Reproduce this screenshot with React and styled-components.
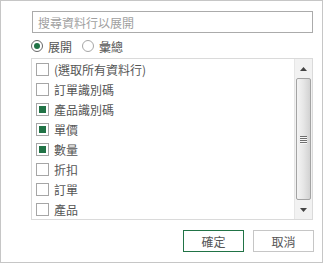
import React from 'react'
import styled, { createGlobalStyle } from 'styled-components'

const Global = createGlobalStyle`
  body {
    margin: 0;
    background: #fff;
    font-family: "Noto Sans CJK TC", "Noto Sans", sans-serif;
  }
`

const columns = [
  { label: '(選取所有資料行)', checked: false },
  { label: '訂單識別碼', checked: false },
  { label: '產品識別碼', checked: true },
  { label: '單價', checked: true },
  { label: '數量', checked: true },
  { label: '折扣', checked: false },
  { label: '訂單', checked: false },
  { label: '產品', checked: false },
]

const App = () => {
  return (
    <>
      <Global />
      <Panel>
        <Search placeholder="搜尋資料行以展開" />
        <Modes>
          <Mode>
            <Radio $on />
            展開
          </Mode>
          <Mode>
            <Radio />
            彙總
          </Mode>
        </Modes>
        <ListBox>
          <Items>
            {columns.map((c) => (
              <Item key={c.label}>
                <Check $on={c.checked} />
                {c.label}
              </Item>
            ))}
          </Items>
          <ScrollBar>
            <Arrow>
              <svg width="7" height="4" viewBox="0 0 7 4">
                <path d="M0 4 L3.5 0 L7 4 Z" fill="#444" />
              </svg>
            </Arrow>
            <Thumb>
              <Grip />
              <Grip />
              <Grip />
              <Grip />
            </Thumb>
            <Arrow>
              <svg width="7" height="4" viewBox="0 0 7 4">
                <path d="M0 0 L7 0 L3.5 4 Z" fill="#444" />
              </svg>
            </Arrow>
          </ScrollBar>
        </ListBox>
        <Actions>
          <Button $primary>確定</Button>
          <Button>取消</Button>
        </Actions>
      </Panel>
    </>
  )
}

const Panel = styled.div`
  box-sizing: border-box;
  width: 323px;
  height: 263px;
  border: 1px solid #c6c6c6;
  padding: 10px 9px 0 30px;
  display: flex;
  flex-direction: column;
`

const Search = styled.input`
  box-sizing: border-box;
  margin-left: 1px;
  width: 281px;
  height: 22px;
  border: 1px solid #ababab;
  padding: 0 5px;
  font-family: inherit;
  font-size: 12px;
  color: #555;
  outline: none;

  &::placeholder {
    color: #a0a0a0;
  }
`

const Modes = styled.div`
  display: flex;
  align-items: center;
  gap: 10px;
  height: 24px;
  margin-top: 1px;
  font-size: 12px;
  color: #555;
`

const Mode = styled.label`
  display: flex;
  align-items: center;
  gap: 5px;
`

const Radio = styled.span`
  box-sizing: border-box;
  width: 12px;
  height: 12px;
  border-radius: 50%;
  border: 1px solid ${(p) => (p.$on ? '#666' : '#a6a6a6')};
  display: inline-flex;
  align-items: center;
  justify-content: center;

  &::after {
    content: '';
    width: 6px;
    height: 6px;
    border-radius: 50%;
    background: ${(p) => (p.$on ? '#217346' : 'transparent')};
  }
`

const ListBox = styled.div`
  box-sizing: border-box;
  width: 282px;
  height: 162px;
  border: 1px solid #dadada;
  display: flex;
`

const Items = styled.div`
  flex: 1;
  padding-left: 4px;
`

const Item = styled.div`
  height: 20px;
  display: flex;
  align-items: center;
  gap: 5px;
  font-size: 12px;
  color: #555;
  white-space: nowrap;
`

const Check = styled.span`
  box-sizing: border-box;
  width: 13px;
  height: 13px;
  border: 1px solid #a6a6a6;
  background: #fff;
  padding: 2px;
  display: inline-block;

  &::after {
    content: '';
    display: block;
    width: 100%;
    height: 100%;
    background: ${(p) => (p.$on ? '#217346' : 'transparent')};
  }
`

const ScrollBar = styled.div`
  width: 17px;
  background: #f2f2f2;
  border-left: 1px solid #e6e6e6;
  display: flex;
  flex-direction: column;
  align-items: center;
`

const Arrow = styled.div`
  height: 19px;
  width: 100%;
  display: flex;
  align-items: center;
  justify-content: center;
`

const Thumb = styled.div`
  box-sizing: border-box;
  flex: 1;
  width: 15px;
  border: 1px solid #a3a3a3;
  border-radius: 2px;
  background: linear-gradient(to right, #f4f4f4, #e6e6e6 50%, #d2d2d2);
  display: flex;
  flex-direction: column;
  align-items: center;
  justify-content: center;
  gap: 1px;
`

const Grip = styled.span`
  width: 7px;
  height: 1px;
  background: #6e6e6e;
  box-shadow: 0 1px 0 #f8f8f8;
`

const Actions = styled.div`
  display: flex;
  justify-content: flex-end;
  gap: 9px;
  margin-top: 10px;
  margin-right: -1px;
`

const Button = styled.button`
  box-sizing: border-box;
  width: 61px;
  height: 22px;
  background: #fff;
  border: 1px solid ${(p) => (p.$primary ? '#217346' : '#c6c6c6')};
  font-family: inherit;
  font-size: 12px;
  color: #555;
  padding: 0;
`

export default App
